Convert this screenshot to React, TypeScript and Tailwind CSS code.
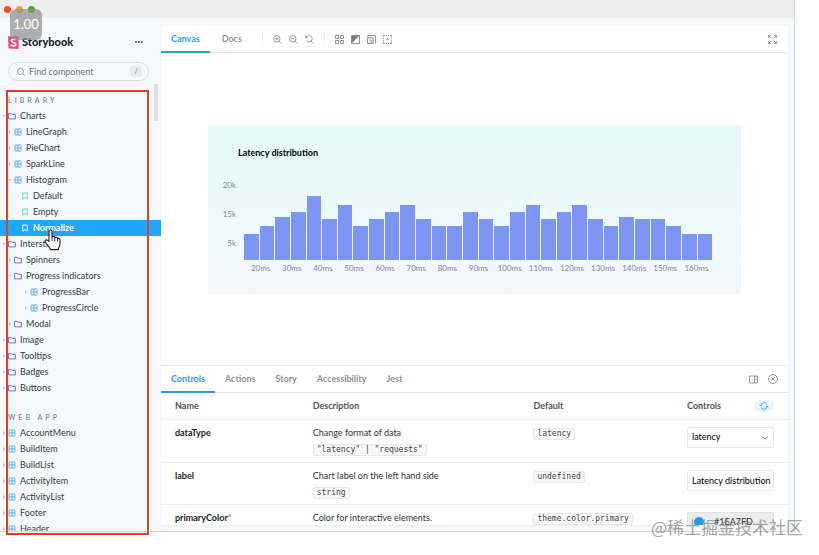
import React from 'react';
import { ChevronDown } from 'lucide-react';

type Kind = 'folder' | 'component' | 'story';

interface TreeItem {
  label: string;
  kind: Kind;
  level: 0 | 1 | 2 | 3;
  open?: boolean;
  selected?: boolean;
}

const library: TreeItem[] = [
  { label: 'Charts', kind: 'folder', level: 0, open: true },
  { label: 'LineGraph', kind: 'component', level: 1 },
  { label: 'PieChart', kind: 'component', level: 1 },
  { label: 'SparkLine', kind: 'component', level: 1 },
  { label: 'Histogram', kind: 'component', level: 1, open: true },
  { label: 'Default', kind: 'story', level: 2 },
  { label: 'Empty', kind: 'story', level: 2 },
  { label: 'Normalize', kind: 'story', level: 2, selected: true },
  { label: 'Interstitial', kind: 'folder', level: 0, open: true },
  { label: 'Spinners', kind: 'folder', level: 1 },
  { label: 'Progress indicators', kind: 'folder', level: 1, open: true },
  { label: 'ProgressBar', kind: 'component', level: 3 },
  { label: 'ProgressCircle', kind: 'component', level: 3 },
  { label: 'Modal', kind: 'folder', level: 1 },
  { label: 'Image', kind: 'folder', level: 0 },
  { label: 'Tooltips', kind: 'folder', level: 0 },
  { label: 'Badges', kind: 'folder', level: 0 },
  { label: 'Buttons', kind: 'folder', level: 0 },
];

const webApp: TreeItem[] = [
  'AccountMenu',
  'BuildItem',
  'BuildList',
  'ActivityItem',
  'ActivityList',
  'Footer',
  'Header',
].map((label) => ({ label, kind: 'component', level: 0 }));

const bars = [
  26, 34, 43, 48, 64, 41, 55, 34, 41, 48, 55, 41, 34, 34, 48,
  41, 34, 48, 55, 41, 48, 55, 41, 34, 43, 41, 41, 34, 26, 26,
];

const ticks = Array.from({ length: 15 }, (_, i) => `${(i + 2) * 10}ms`);

const indent = {
  0: 'pl-0.5',
  1: 'pl-2',
  2: 'pl-[15px]',
  3: 'pl-6',
};

function KindIcon({ kind, selected }: { kind: Kind; selected?: boolean }) {
  if (kind === 'folder') {
    return (
      <svg className="size-2 shrink-0 text-[#6b5fb5]" viewBox="0 0 8 8" fill="none" stroke="currentColor" strokeWidth=".9">
        <path d="M.6 6.9V1.3h2.3l.9 1h3.5v4.600z" />
      </svg>
    );
  }
  if (kind === 'component') {
    return (
      <svg className="size-2 shrink-0 text-[#4fa9d8]" viewBox="0 0 8 8" fill="none" stroke="currentColor" strokeWidth=".9">
        <rect x="1" y="1" width="6" height="6" rx=".8" />
        <path d="M4 1v6M1 4h6" />
      </svg>
    );
  }
  return (
    <svg className={`size-2 shrink-0 ${selected ? 'text-white' : 'text-[#5fcdb0]'}`} viewBox="0 0 8 8" fill="none" stroke="currentColor" strokeWidth=".9">
      <path d="M1.8 1h4.400v6.200L4 5.400 1.800 7.200z" />
    </svg>
  );
}

function TreeRow({ item }: { item: TreeItem }) {
  return (
    <li>
      <a
        href="#"
        className={`flex h-4 items-center whitespace-nowrap ${indent[item.level]} ${
          item.selected ? 'bg-[#1ea7fd] font-bold text-white' : 'text-[#333b44]'
        }`}
      >
        <svg className="mr-0.5 size-1 shrink-0 text-[#c2c8ce]" viewBox="0 0 4 4" fill="currentColor">
          {item.kind !== 'story' && <path d={item.open ? 'M0 1h4L2 3.4z' : 'M1 0v4l2.4-2z'} />}
        </svg>
        <KindIcon kind={item.kind} selected={item.selected} />
        <span className="ml-1">{item.label}</span>
      </a>
    </li>
  );
}

function Sidebar() {
  return (
    <aside className="relative flex w-[161px] shrink-0 flex-col overflow-hidden">
      <div className="mt-4 flex h-4 items-center pl-2 pr-3.5">
        <svg className="h-[13px] w-[11px]" viewBox="0 0 11 13">
          <path d="M0 .6 10.6 0v13L.5 12.5z" fill="#f0478a" />
          <path d="M7.8 4.2C7.7 2.9 3.4 2.6 3.4 4.7c0 2.2 4.4 1.4 4.4 3.6 0 2.1-4.6 2-4.7.2" fill="none" stroke="#fff" strokeWidth="1.6" />
        </svg>
        <h1 className="ml-[3px] text-[11px] font-black text-[#20242a]">Storybook</h1>
        <button aria-label="Menu" className="ml-auto flex size-4 items-center justify-center rounded-full">
          <svg className="h-1 w-2" viewBox="0 0 8 3" fill="#4d565f">
            <circle cx="1" cy="1.5" r="1" /><circle cx="4" cy="1.5" r="1" /><circle cx="7" cy="1.5" r="1" />
          </svg>
        </button>
      </div>
      <label className="ml-2 mr-3 mt-3 flex h-[19px] shrink-0 items-center rounded-full border border-[#d9dfe5] pl-2 pr-1.5">
        <svg className="size-2 shrink-0" viewBox="0 0 8 8" fill="none" stroke="#7d868f" strokeWidth=".8">
          <circle cx="3.5" cy="3.5" r="3" /><path d="m5.7 5.7 2 2" />
        </svg>
        <input type="text" aria-label="Find component" placeholder="Find component" className="ml-1 w-full min-w-0 text-[9px] outline-none placeholder:text-[#6d757d]" />
        <kbd className="flex h-[11px] w-3 shrink-0 items-center justify-center rounded-xs bg-[#e9edf0] font-[Lato] text-[7px] text-[#5f666e]">/</kbd>
      </label>
      <h2 className="mt-[11px] h-4 shrink-0 pl-2 text-[7px] font-bold leading-4 tracking-[3px] text-[#8a939c]">LIBRARY</h2>
      <ul>{library.map((item) => <TreeRow key={item.label} item={item} />)}</ul>
      <h2 className="mt-[13px] h-4 shrink-0 pl-2 text-[7px] font-bold leading-4 tracking-[3px] text-[#8a939c]">WEB APP</h2>
      <ul>{webApp.map((item) => <TreeRow key={item.label} item={item} />)}</ul>
      <div className="absolute right-[3px] top-[66px] h-[37px] w-1 bg-[#dde1e4]" />
    </aside>
  );
}

function Tab({ label, active }: { label: string; active?: boolean }) {
  return (
    <button
      className={`h-full border-b-2 font-bold ${
        active ? 'border-[#2a9fd8] text-[#2a9fe0]' : 'border-transparent text-[#8d9296]'
      }`}
    >
      <span className="px-2.5">{label}</span>
    </button>
  );
}

function Toolbar() {
  return (
    <div className="flex h-[27px] shrink-0 items-center border-b border-[#dfe2e5] pr-[11px] text-[#7c8287]">
      <div className="flex h-[27px] gap-0.5 self-start">
        <Tab label="Canvas" active />
        <Tab label="Docs" />
      </div>
      <div className="ml-2.5 flex h-3.5 items-center gap-[7px] border-l border-[#eceff1] pl-2.5">
        <button aria-label="Zoom in">
          <svg className="block size-[9px]" viewBox="0 0 9 9" fill="none" stroke="currentColor" strokeWidth=".8">
            <circle cx="3.8" cy="3.8" r="3.200" /><path d="m6.200 6.200 2.400 2.400M2.200 3.800h3.200M3.800 2.200v3.200" />
          </svg>
        </button>
        <button aria-label="Zoom out">
          <svg className="block size-[9px]" viewBox="0 0 9 9" fill="none" stroke="currentColor" strokeWidth=".8">
            <circle cx="3.8" cy="3.8" r="3.200" /><path d="m6.200 6.200 2.400 2.400M2.200 3.800h3.200" />
          </svg>
        </button>
        <button aria-label="Reset zoom">
          <svg className="block size-[9px]" viewBox="0 0 9 9" fill="none" stroke="currentColor" strokeWidth=".8">
            <path d="M.7.800v2h2M.9 2.700a3.200 3.200 0 1 1 .2 2.600M6.200 6.200l2.400 2.400" />
          </svg>
        </button>
      </div>
      <div className="ml-2.5 flex h-3.5 items-center gap-[7px] border-l border-[#eceff1] pl-2.5">
        <button aria-label="Grid">
          <svg className="block size-[9px]" viewBox="0 0 8 8" fill="none" stroke="currentColor" strokeWidth=".8">
            <path d="M.5.5h2.600v2.600H.5zM4.900.5h2.600v2.600H4.900zM.5 4.900h2.600v2.600H.5zM4.900 4.900h2.600v2.600H4.900z" />
          </svg>
        </button>
        <button aria-label="Background">
          <svg className="block size-[9px]" viewBox="0 0 8 8">
            <path d="M.5.5h7v7h-7z" fill="none" stroke="currentColor" strokeWidth=".8" />
            <path d="M.5.5h7l-7 7z" fill="currentColor" />
          </svg>
        </button>
        <button aria-label="Viewport">
          <svg className="block size-[9px]" viewBox="0 0 8 8" fill="none" stroke="currentColor" strokeWidth=".8">
            <path d="M.5 1.500V.5h7v7M.5 2.600h4.900v4.900H.5zM2.100 4.500h1.600v3" />
          </svg>
        </button>
        <button aria-label="Outline">
          <svg className="block size-[9px]" viewBox="0 0 9 9" fill="none" stroke="currentColor" strokeWidth=".8">
            <path d="M.5 2V.5H2M3 .5h1M5 .5h1M7 .5h1.500V2M8.500 3v1M8.500 5v1M8.500 7v1.500H7M6 8.500H5M4 8.500H3M2 8.500H.5V7M.5 6V5M.5 4V3M3.500 4.500h2M4.500 3.500v2" />
          </svg>
        </button>
      </div>
      <button aria-label="Full screen" className="ml-auto">
        <svg className="block size-[9px]" viewBox="0 0 8 8" fill="none" stroke="currentColor" strokeWidth=".7">
          <path d="M.5 2.500v-2h2M5.500.5h2v2M7.500 5.500v2h-2M2.500 7.500h-2v-2M.5.5 3 3M7.500.5 5 3M7.500 7.500 5 5M.5 7.500 3 5" />
        </svg>
      </button>
    </div>
  );
}

function Histogram() {
  return (
    <section className="mx-[47px] grow bg-linear-to-b from-[#e6f8fa] via-[#edfafc] to-[#f2f7fb] pb-[18px] pl-[30px] pr-[29px] pt-[22px] text-[8px]">
      <h3 className="text-[9px] font-bold leading-3 text-black">Latency distribution</h3>
      <div className="-ml-5 mt-3 flex text-[#80898f]">
        <ul className="w-[26px] shrink-0 pr-2 text-right leading-[29px]">
          <li>20k</li>
          <li>15k</li>
          <li>5k</li>
        </ul>
        <div className="flex h-[89px] grow items-end gap-px">
          {bars.map((height, i) => (
            <div key={i} className="grow bg-[#7c96f5]" style={{ height }} />
          ))}
        </div>
      </div>
      <ul className="ml-[7px] grid grid-cols-15 text-center leading-4 text-[#80898f]">
        {ticks.map((tick) => <li key={tick}>{tick}</li>)}
      </ul>
    </section>
  );
}

function Code({ children }: { children: React.ReactNode }) {
  return (
    <code className="inline-block h-3 whitespace-pre rounded-xs border border-[#e6e8ea] bg-[#f8f8f8] px-[3px] font-['DejaVu_Sans_Mono',monospace] text-[8px] leading-[10px] text-[#444]">
      {children}
    </code>
  );
}

function ControlsTable() {
  return (
    <table className="w-full table-fixed text-left text-[#333]">
      <colgroup>
        <col className="w-[24.2%]" />
        <col className="w-[35.2%]" />
        <col className="w-[24.5%]" />
        <col />
      </colgroup>
      <thead>
        <tr className="h-[26px] border-b border-[#eceff1] text-[#4d5358]">
          <th className="pl-3.5 font-bold">Name</th>
          <th className="font-bold">Description</th>
          <th className="font-bold">Default</th>
          <th className="pr-3.5 font-bold">
            <div className="flex items-center justify-between">
              Controls
              <button aria-label="Reset controls" className="flex h-3 w-5 items-center justify-center rounded-full bg-[#e8f5fd]">
                <svg className="size-2.5" viewBox="0 0 10 10" fill="none" stroke="#2aa3ec" strokeWidth=".9">
                  <path d="M1.700 4.700A3.400 3.400 0 0 1 8 3.400M8.300 5.300A3.400 3.400 0 0 1 2 6.600M.4 3.700l1.300 1.300L3 3.700M7 6.300l1.300-1.300 1.300 1.300" />
                </svg>
              </button>
            </div>
          </th>
        </tr>
      </thead>
      <tbody className="align-top leading-4">
        <tr className="h-[43px] border-b border-[#eceff1]">
          <th className="pl-3.5 pt-[5px] font-bold text-[#222]">dataType</th>
          <td className="pt-[5px]">
            <p className="h-4">Change format of data</p>
            <Code>{'"latency" | "requests"'}</Code>
          </td>
          <td className="pt-[5px]"><Code>latency</Code></td>
          <td className="pr-3.5 pt-[7px]">
            <div className="relative">
              <select aria-label="dataType" className="block h-[21px] w-full appearance-none rounded-xs border border-[#e6e9ec] bg-white pl-1 text-black">
                <option>latency</option>
              </select>
              <ChevronDown className="pointer-events-none absolute right-1 top-1.5 size-2.5 text-[#555]" />
            </div>
          </td>
        </tr>
        <tr className="h-[42px] border-b border-[#eceff1]">
          <th className="pl-3.5 pt-[5px] font-bold text-[#222]">label</th>
          <td className="pt-[5px]">
            <p className="h-4">Chart label on the left hand side</p>
            <Code>string</Code>
          </td>
          <td className="pt-[5px]"><Code>undefined</Code></td>
          <td className="pr-3.5 pt-[7px]">
            <input aria-label="label" defaultValue="Latency distribution" className="block h-[21px] w-full rounded-xs border border-[#e6e9ec] bg-white pl-1 text-black" />
          </td>
        </tr>
        <tr>
          <th className="pl-3.5 pt-[5px] font-bold text-[#222]">primaryColor<span className="text-[#ff5a2c]">*</span></th>
          <td className="pt-[5px]">Color for interactive elements.</td>
          <td className="pt-[5px]"><Code>theme.color.primary</Code></td>
          <td className="pr-3.5 pt-[7px]">
            <button className="flex h-[21px] w-full items-center rounded-xs border border-[#dfe2e4] bg-[#ececec] pl-1.5 text-[#333]">
              <span className="size-2.5 rounded-full bg-[#1e9fe8]" />
              <span className="ml-2.5">#1EA7FD</span>
            </button>
          </td>
        </tr>
      </tbody>
    </table>
  );
}

function Addons() {
  return (
    <section className="h-40 shrink-0 overflow-hidden border-t border-[#e4e8ea]">
      <div className="flex h-[27px] items-center border-b border-[#e4e8ea] pr-2.5 text-[#7c8287]">
        <div className="flex h-[27px] self-start">
          <Tab label="Controls" active />
          <Tab label="Actions" />
          <Tab label="Story" />
          <Tab label="Accessibility" />
          <Tab label="Jest" />
        </div>
        <button aria-label="Change orientation" className="ml-auto">
          <svg className="block size-[9px]" viewBox="0 0 9 9" fill="none" stroke="currentColor" strokeWidth=".8">
            <path d="M.5 1h8v7h-8zM5.600 1v7M6.600 3h1M6.600 4.500h1" />
          </svg>
        </button>
        <button aria-label="Close panel" className="ml-2.5">
          <svg className="block size-2.5" viewBox="0 0 10 10" fill="none" stroke="currentColor" strokeWidth=".9">
            <circle cx="5" cy="5" r="4.400" /><path d="m3.300 3.300 3.400 3.400M6.700 3.300 3.300 6.700" />
          </svg>
        </button>
      </div>
      <ControlsTable />
    </section>
  );
}

export default function App() {
  return (
    <div className="relative h-screen overflow-hidden bg-white pb-[23px] pr-6 font-[Lato,sans-serif] text-[9px]">
      <div className="flex h-full flex-col overflow-hidden border-b border-r border-[#cfd4d7] bg-[#f5f9fc]">
        <header className="flex h-[18px] shrink-0 items-center gap-[5px] bg-[#eeeeee] pl-1">
          <span className="size-[7px] rounded-full bg-[#ee4b2f]" />
          <span className="size-[7px] rounded-full bg-[#e9a61c]" />
          <span className="size-[7px] rounded-full bg-[#4aa528]" />
        </header>
        <div className="flex min-h-0 grow">
          <Sidebar />
          <main className="mb-1.5 mr-1.5 mt-2 flex min-w-0 grow flex-col overflow-hidden rounded-xs bg-white shadow-xs">
            <Toolbar />
            <div className="flex grow items-center">
              <Histogram />
            </div>
            <Addons />
          </main>
        </div>
      </div>

      {/* recording overlays */}
      <div className="absolute left-[6px] top-[90px] h-[445px] w-[143px] border-2 border-[#e03f25]" />
      <div className="absolute left-2.5 top-[9px] flex h-[31px] w-8 items-center justify-center rounded-md bg-[#8f8f8f]/70 text-[13px] text-white">1.00</div>
      <svg className="absolute left-11 top-[229px] h-[22px] w-[17px]" viewBox="0 0 17 22">
        <path
          d="M5 12.5V2.6C5 .4 8 .4 8 2.6v5.6c.3-1.3 2.7-1 2.8.6.6-1 2.5-.6 2.7.8.9-.7 2.5-.1 2.5 1.5v3.5c0 2.3-1.5 3.5-1.5 6H6.4c0-2.1-3.1-4.6-4.9-7.3-1.2-1.8.9-3 2-1.9z"
          fill="#fff"
          stroke="#222"
          strokeWidth="1.1"
          strokeLinejoin="round"
        />
        <path d="M8 8v4M10.8 9v3.5M13.5 10v2.5" stroke="#222" strokeWidth=".9" />
      </svg>
      <div className="absolute bottom-4 right-4 font-['Noto_Sans_CJK_SC',sans-serif] text-[17px] leading-6 text-[#8c8c8c]/80">@稀土掘金技术社区</div>
    </div>
  );
}
